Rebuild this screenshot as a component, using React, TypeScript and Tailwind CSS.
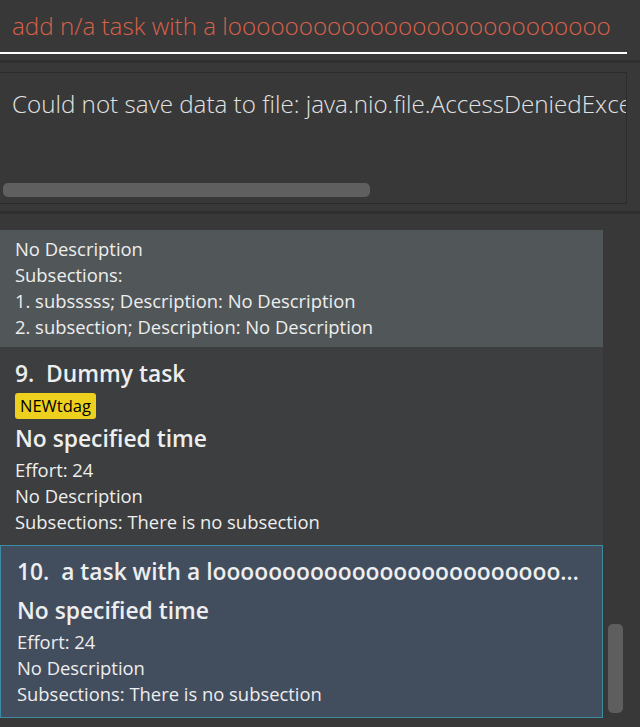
import React from 'react';

const small = "text-[18.4px] leading-[26px] text-[#eeeeee]";
const big = "text-[22.8px] leading-[30px] font-semibold text-[#eeeeee]";

export default function App() {
  return (
    <div
      className="w-[640px] h-[727px] bg-[#383838] overflow-hidden flex flex-col [font-variant-ligatures:none]"
      style={{ fontFamily: '"Open Sans", "Noto Sans", sans-serif' }}
    >
      {/* Command box */}
      <div className="h-[60px] shrink-0 pr-[13px]">
        <div className="h-[54px] border-b-2 border-white pl-[12px] pt-[10px]">
          <div className="text-[24.2px] leading-[32px] font-light text-[#d8614a] whitespace-nowrap overflow-hidden">
            add n/a task with a looooooooooooooooooooooooooo
          </div>
        </div>
      </div>
      <div className="h-[3px] shrink-0 bg-[#2f2f2f]" />

      {/* Result display */}
      <div className="h-[148px] shrink-0 pt-[9px] pr-[13px]">
        <div className="h-[132px] border border-[#2c2c2c] border-l-0 flex flex-col">
          <div className="flex-1 overflow-hidden pl-[12px] pt-[15px]">
            <div className="text-[24.2px] leading-[32px] font-light text-[#e2e2e2] whitespace-nowrap">
              Could not save data to file: java.nio.file.AccessDeniedException
            </div>
          </div>
          <div className="h-[20px] px-[3px] pb-[5px] flex items-start">
            <div className="w-[367px] h-[14px] rounded-[5px] bg-[#5f5f5f]" />
          </div>
        </div>
      </div>
      <div className="h-[3px] shrink-0 bg-[#2f2f2f]" />

      {/* Task list */}
      <div className="flex-1 flex pt-[16px]">
        <div className="w-[603px] flex flex-col">
          <div className="bg-[#515658] pl-[15px] pt-[6px] pb-[8px] h-[117px]">
            <div className={small}>No Description</div>
            <div className={small}>Subsections:</div>
            <div className={small}>1. subsssss; Description: No Description</div>
            <div className={small}>2. subsection; Description: No Description</div>
          </div>

          <div className="bg-[#3c3e40] pl-[15px] pt-[12px] h-[198px]">
            <div className={big}>9.&nbsp;&nbsp;Dummy task</div>
            <div className="mt-[4px] flex">
              <span className="bg-[#eed11f] text-black rounded-[3px] px-[5px] h-[26px] leading-[26px] text-[16.5px]">
                NEWtdag
              </span>
            </div>
            <div className={`${big} mt-[5px]`}>No specified time</div>
            <div className={`${small} mt-[3px]`}>Effort: 24</div>
            <div className={small}>No Description</div>
            <div className={small}>Subsections: There is no subsection</div>
          </div>

          <div className="bg-[#424d5e] border border-[#3d8aa3] pl-[16px] pt-[11px] h-[173px]">
            <div className={`${big} whitespace-nowrap overflow-hidden text-ellipsis pr-[14px]`}>
              10.&nbsp;&nbsp;a task with a loooooooooooooooooooooooooooooooooooong name
            </div>
            <div className={`${big} mt-[9px]`}>No specified time</div>
            <div className={`${small} mt-[3px]`}>Effort: 24</div>
            <div className={small}>No Description</div>
            <div className={small}>Subsections: There is no subsection</div>
          </div>
        </div>

        {/* vertical scrollbar */}
        <div className="w-[37px] pl-[5px] pt-[394px]">
          <div className="w-[15px] h-[89px] rounded-[5px] bg-[#5e5e5e]" />
        </div>
      </div>
    </div>
  );
}
